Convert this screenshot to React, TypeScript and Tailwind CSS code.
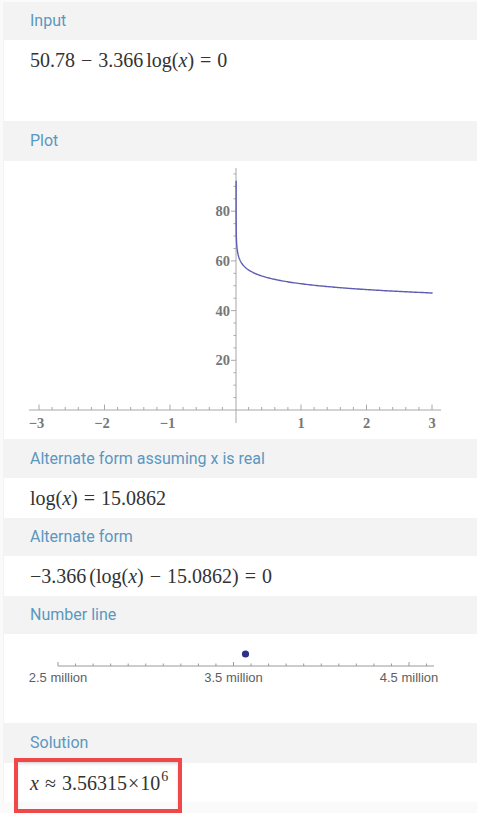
import React from "react";

const serif = { fontFamily: '"Liberation Serif", "Times New Roman", serif' } as const;

function Header({ label, h }: { label: string; h: string }) {
  return (
    <div className={`${h} flex items-center bg-[#f3f3f3] pl-[27px]`}>
      <span className="text-[16px] leading-none text-[#5b97c0] [font-family:Roboto,'Liberation_Sans',sans-serif]">
        {label}
      </span>
    </div>
  );
}

function Body({ children, className = "" }: { children: React.ReactNode; className?: string }) {
  return <div className={`border-l border-[#f3f3f3] bg-white ${className}`}>{children}</div>;
}

function MathRow({ children }: { children: React.ReactNode }) {
  return (
    <div className="flex h-[40px] items-center pl-[26px] text-[20px] leading-none text-[#333]" style={serif}>
      <span className="whitespace-pre">{children}</span>
    </div>
  );
}

function Op({ children }: { children: React.ReactNode }) {
  return <span className="mx-[6px] inline-block">{children}</span>;
}

const X = (v: number) => 235.5 + v * 65.5;
const Y = (v: number) => 410 - v * 2.485;

function curvePath() {
  const f = (x: number) => 50.78 - 3.366 * Math.log(x);
  const pts: number[] = [];
  const lo = Math.log(4.5e-6);
  const hi = Math.log(3);
  for (let i = 0; i <= 120; i++) pts.push(Math.exp(lo + (i / 120) * (hi - lo)));
  for (let i = 1; i <= 120; i++) pts.push((3 * i) / 120);
  pts.sort((a, b) => a - b);
  return pts
    .map((x, i) => `${i === 0 ? "M" : "L"}${(X(x) + 0.6).toFixed(2)},${Y(f(x)).toFixed(2)}`)
    .join(" ");
}

function Plot() {
  const minorX: number[] = [];
  for (let i = -15; i <= 15; i++) if (i !== 0) minorX.push(i);
  const minorY: number[] = [];
  for (let v = 5; v <= 95; v += 5) minorY.push(v);
  return (
    <svg width="473" height="278" className="block">
      <g transform="translate(-4,-161)" style={serif}>
        <line x1="29" y1="410" x2="441" y2="410" stroke="#a8a8a8" strokeWidth="1" />
        {minorX.map((i) => {
          const major = i % 5 === 0;
          const v = i / 5;
          return (
            <line key={i} x1={X(v)} x2={X(v)} y1={major ? 404.5 : 407} y2={410} stroke="#a8a8a8" strokeWidth="1" />
          );
        })}
        {[-3, -2, -1, 1, 2, 3].map((v) => (
          <text
            key={v}
            x={X(v) + (v < 0 ? -2.5 : 0)}
            y={427.5}
            fontSize="14.5"
            fill="#777"
            textAnchor="middle"
            fontWeight="bold"
          >
            {v < 0 ? `\u2212${-v}` : v}
          </text>
        ))}
        <line x1="236" y1="168" x2="236" y2="423" stroke="#a8a8a8" strokeWidth="1" />
        {minorY.map((v) => {
          const major = v % 20 === 0;
          return (
            <line key={v} x1={major ? 231 : 233.5} x2={236} y1={Y(v)} y2={Y(v)} stroke="#a8a8a8" strokeWidth="1" />
          );
        })}
        {[20, 40, 60, 80].map((v) => (
          <text key={v} x={230} y={Y(v) + 5} fontSize="14.5" fill="#777" textAnchor="end" fontWeight="bold">
            {v}
          </text>
        ))}
        <path d={curvePath()} fill="none" stroke="#5d5db3" strokeWidth="1.4" />
      </g>
    </svg>
  );
}

function NumberLine() {
  const ticks: number[] = [];
  for (let k = 0; k <= 21; k++) ticks.push(k);
  const px = (k: number) => 58 + k * 17.55;
  return (
    <svg width="473" height="89" className="block">
      <g transform="translate(-4,-634)">
        <line x1="58" y1="666" x2="434" y2="666" stroke="#9a9a9a" strokeWidth="1" />
        {ticks.map((k) => (
          <line
            key={k}
            x1={px(k)}
            x2={px(k)}
            y1={k % 10 === 0 ? 662 : 663.5}
            y2={666}
            stroke="#9a9a9a"
            strokeWidth="1"
          />
        ))}
        {[
          [0, "2.5 million"],
          [10, "3.5 million"],
          [20, "4.5 million"],
        ].map(([k, t]) => (
          <text
            key={t as string}
            x={px(k as number)}
            y={682}
            fontSize="13"
            fill="#5e5e5e"
            textAnchor="middle"
            style={{ fontFamily: '"Liberation Sans", Arial, sans-serif' }}
          >
            {t}
          </text>
        ))}
        <circle cx="245.5" cy="654" r="3.6" fill="#2e2e8c" />
      </g>
    </svg>
  );
}

export default function App() {
  return (
    <div className="relative h-[813px] w-[477px] overflow-hidden bg-[#fafafa] pl-[3px] pt-[2px]">
      <Header label="Input" h="h-[38px]" />
      <Body className="h-[81px]">
        <MathRow>
          50.78<Op>−</Op>3.366<span className="ml-[3px]">log(</span>
          <i>x</i>)<Op>=</Op>0
        </MathRow>
      </Body>

      <Header label="Plot" h="h-[40px]" />
      <Body className="h-[278px]">
        <Plot />
      </Body>

      <Header label="Alternate form assuming x is real" h="h-[39px]" />
      <Body className="h-[40px]">
        <MathRow>
          log(<i>x</i>)<Op>=</Op>15.0862
        </MathRow>
      </Body>

      <Header label="Alternate form" h="h-[38px]" />
      <Body className="h-[40px]">
        <MathRow>
          −3.366<span className="ml-[3px]">(log(</span>
          <i>x</i>)<Op>−</Op>15.0862)<Op>=</Op>0
        </MathRow>
      </Body>

      <Header label="Number line" h="h-[38px]" />
      <Body className="h-[89px]">
        <NumberLine />
      </Body>

      <Header label="Solution" h="h-[40px]" />
      <Body className="h-[39px]">
        <MathRow>
          <i>x</i>
          <span className="mx-[6px] inline-block">≈</span>3.56315<span className="mx-[1px] inline-block">×</span>10
          <span className="relative -top-[9px] ml-px text-[14px]">6</span>
        </MathRow>
      </Body>

      <div className="pointer-events-none absolute left-[14px] top-[758px] h-[55px] w-[168px] border-4 border-[#f04848] shadow-[inset_0_2px_3px_rgba(0,0,0,0.12)]" />
    </div>
  );
}
